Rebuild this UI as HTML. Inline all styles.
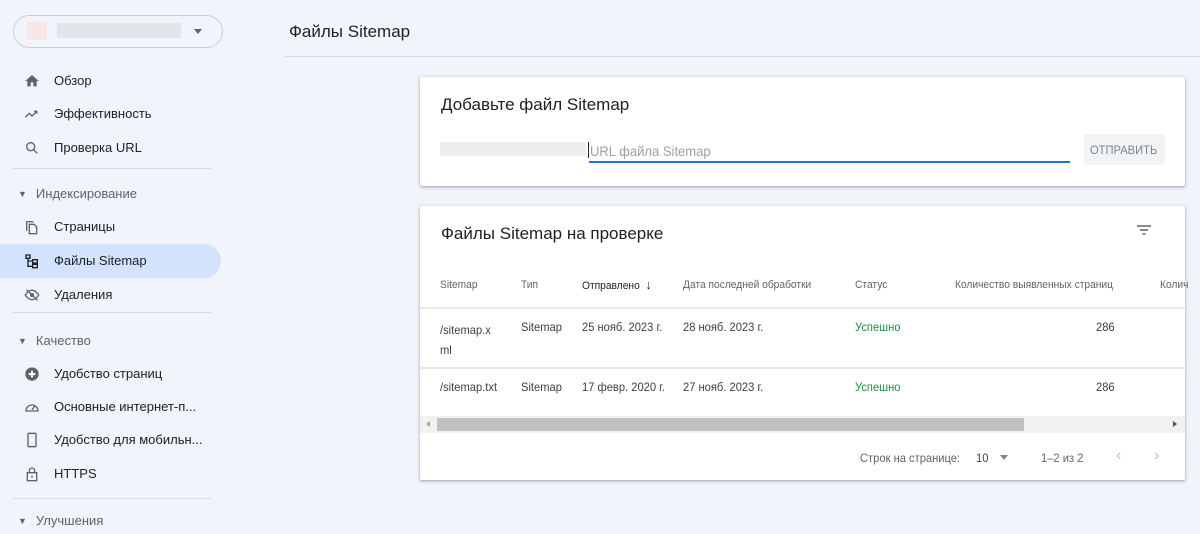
<!DOCTYPE html>
<html><head><meta charset="utf-8"><style>
*{box-sizing:border-box;margin:0;padding:0}
body{width:1200px;height:534px;overflow:hidden;background:#f1f4fb;font-family:"Liberation Sans",sans-serif;color:#202124;position:relative}
.a{position:absolute}
.nav{position:absolute;left:0;width:221px;height:34px;font-size:13px;color:#202124}
.nav span{position:absolute;left:54px;top:9px}
.nav svg{position:absolute;left:24px;top:9px}
.sec{position:absolute;left:18px;font-size:13px;color:#5f6368}
.sec i{font-style:normal;font-size:9px;margin-right:9px;position:relative;top:-1px}
.sep{position:absolute;left:13px;width:198px;height:1px;background:#dadce0}
.card{position:absolute;left:420px;width:765px;background:#fff;box-shadow:0 1px 2px rgba(60,64,67,.3),0 1px 3px 1px rgba(60,64,67,.15);border-radius:2px}
.th,.td{transform:scaleX(.93);transform-origin:left top;white-space:nowrap}
.th{position:absolute;top:73px;font-size:11px;color:#5f6368}
.td{position:absolute;font-size:12px;color:#3c4043}
.hl{position:absolute;left:0;right:0;height:1px;background:#e8eaed}
</style></head><body>
<div class="a" style="left:13px;top:15px;width:210px;height:33px;border:1px solid #c9ccd1;border-radius:17px"></div>
<div class="a" style="left:27px;top:22px;width:20px;height:18px;background:#f6e6e6"></div>
<div class="a" style="left:57px;top:23px;width:124px;height:15px;background:#e2e4e9"></div>
<div class="a" style="left:194px;top:29px;border:4px solid transparent;border-top:5px solid #5f6368"></div>

<div class="nav" style="top:64px"><svg width="16" height="16" viewBox="0 0 24 24"><path d="M10 20v-6h4v6h5v-8h3L12 3 2 12h3v8z" fill="#5f6368"/></svg><span>Обзор</span></div>
<div class="nav" style="top:97px"><svg width="16" height="16" viewBox="0 0 24 24"><path d="M2 17l6-6 4 4 7-7M15 8h4v4" fill="none" stroke="#5f6368" stroke-width="2"/></svg><span>Эффективность</span></div>
<div class="nav" style="top:131px"><svg width="16" height="16" viewBox="0 0 24 24"><circle cx="10" cy="10" r="6" fill="none" stroke="#5f6368" stroke-width="2"/><path d="M14.5 14.5L20 20" stroke="#5f6368" stroke-width="2"/></svg><span>Проверка URL</span></div>
<div class="sep" style="top:168px"></div>
<div class="sec" style="top:186px"><i>▼</i>Индексирование</div>
<div class="nav" style="top:210px"><svg width="16" height="16" viewBox="0 0 24 24"><path d="M4 4v14M4 4h10M8 8h7l4 4v10H8z" fill="none" stroke="#5f6368" stroke-width="2"/></svg><span>Страницы</span></div>
<div class="nav" style="top:244px;background:#d3e3fd;border-radius:0 17px 17px 0"><svg width="16" height="16" viewBox="0 0 24 24"><path d="M3 3h6v5H3zM13 10h7v5h-7zM13 17h7v5h-7zM6 8v12h7M6 12h7" fill="none" stroke="#202124" stroke-width="2"/></svg><span>Файлы Sitemap</span></div>
<div class="nav" style="top:278px"><svg width="16" height="16" viewBox="0 0 24 24"><path d="M2 12s4-7 10-7 10 7 10 7-4 7-10 7S2 12 2 12z" fill="none" stroke="#5f6368" stroke-width="2"/><circle cx="12" cy="12" r="3" fill="#5f6368"/><path d="M4 4l16 16" stroke="#5f6368" stroke-width="2"/></svg><span>Удаления</span></div>
<div class="sep" style="top:312px"></div>
<div class="sec" style="top:333px"><i>▼</i>Качество</div>
<div class="nav" style="top:357px"><svg width="16" height="16" viewBox="0 0 24 24"><circle cx="12" cy="12" r="10" fill="#5f6368"/><path d="M12 7v10M7 12h10" stroke="#fff" stroke-width="3"/></svg><span>Удобство страниц</span></div>
<div class="nav" style="top:390px"><svg width="16" height="16" viewBox="0 0 24 24"><path d="M3 18a9 9 0 0 1 18 0z" fill="none" stroke="#5f6368" stroke-width="2"/><path d="M12 16l4-5" stroke="#5f6368" stroke-width="2"/></svg><span>Основные интернет-п...</span></div>
<div class="nav" style="top:423px"><svg width="16" height="16" viewBox="0 0 24 24"><rect x="6" y="2" width="12" height="20" rx="1" fill="none" stroke="#5f6368" stroke-width="2"/></svg><span>Удобство для мобильн...</span></div>
<div class="nav" style="top:457px"><svg width="16" height="16" viewBox="0 0 24 24"><path d="M8 10V7a4 4 0 0 1 8 0v3" fill="none" stroke="#5f6368" stroke-width="2"/><rect x="5" y="10" width="14" height="12" fill="none" stroke="#5f6368" stroke-width="2"/><circle cx="12" cy="16" r="1.5" fill="#5f6368"/></svg><span>HTTPS</span></div>
<div class="sep" style="top:498px"></div>
<div class="sec" style="top:513px"><i>▼</i>Улучшения</div>

<div class="a" style="left:289px;top:22px;font-size:17px">Файлы Sitemap</div>
<div class="a" style="left:285px;top:56px;width:915px;height:1px;background:#dadce0"></div>

<div class="card" style="top:77px;height:109px">
 <div class="a" style="left:21px;top:18px;font-size:17px">Добавьте файл Sitemap</div>
 <div class="a" style="left:20px;top:65px;width:146px;height:14px;background:#eceef0"></div>
 <div class="a" style="left:168px;top:65px;width:1px;height:16px;background:#202124"></div>
 <div class="td" style="left:170px;top:66px;font-size:14px;color:#9aa0a6">URL файла Sitemap</div>
 <div class="a" style="left:169px;top:84px;width:481px;height:2px;background:#1a73e8"></div>
 <div class="a" style="left:664px;top:57px;width:81px;height:31px;background:#f1f3f4;border-radius:3px"></div>
 <div class="td" style="left:670px;top:66px;font-size:12px;color:#80868b">ОТПРАВИТЬ</div>
</div>

<div class="card" style="top:206px;height:274px">
 <div class="a" style="left:21px;top:18px;font-size:17px">Файлы Sitemap на проверке</div>
 <svg class="a" style="left:716px;top:17px" width="16" height="14" viewBox="0 0 16 14"><path d="M1 3h14M4 7h8M6.5 11h3" stroke="#5f6368" stroke-width="1.6"/></svg>
 <div class="th" style="left:20px">Sitemap</div>
 <div class="th" style="left:101px">Тип</div>
 <div class="th" style="left:162px;color:#202124;top:71px">Отправлено&nbsp;&nbsp;<span style="font-size:13px">↓</span></div>
 <div class="th" style="left:263px">Дата последней обработки</div>
 <div class="th" style="left:435px">Статус</div>
 <div class="th" style="left:535px">Количество выявленных страниц</div>
 <div class="th" style="left:740px">Колич</div>
 <div class="hl" style="top:101px;height:2px"></div>
 <div class="td" style="left:20px;top:114px;line-height:20px">/sitemap.x<br>ml</div>
 <div class="td" style="left:101px;top:114px">Sitemap</div>
 <div class="td" style="left:162px;top:114px">25 нояб. 2023 г.</div>
 <div class="td" style="left:263px;top:114px">28 нояб. 2023 г.</div>
 <div class="td" style="left:435px;top:114px;color:#1e8e3e">Успешно</div>
 <div class="td" style="left:676px;top:114px">286</div>
 <div class="hl" style="top:161px;height:2px"></div>
 <div class="td" style="left:20px;top:174px">/sitemap.txt</div>
 <div class="td" style="left:101px;top:174px">Sitemap</div>
 <div class="td" style="left:162px;top:174px">17 февр. 2020 г.</div>
 <div class="td" style="left:263px;top:174px">27 нояб. 2023 г.</div>
 <div class="td" style="left:435px;top:174px;color:#1e8e3e">Успешно</div>
 <div class="td" style="left:676px;top:174px">286</div>
 <div class="a" style="left:0;top:210px;width:765px;height:17px;background:#f1f1f1"></div>
 <div class="a" style="left:17px;top:212px;width:587px;height:13px;background:#c1c1c1"></div>
 <div class="a" style="left:6px;top:215px;border:3px solid transparent;border-right:4px solid #a3a3a3;border-left:0"></div>
 <div class="a" style="left:753px;top:215px;border:3px solid transparent;border-left:4px solid #505050;border-right:0"></div>
 <div class="td" style="left:440px;top:245px;color:#5f6368">Строк на странице:</div>
 <div class="td" style="left:556px;top:245px">10</div>
 <div class="a" style="left:580px;top:249px;border:4px solid transparent;border-top:5px solid #80868b"></div>
 <div class="td" style="left:621px;top:245px;color:#5f6368">1–2 из 2</div>
 <div class="a" style="left:696px;top:241px;color:#bdc1c6;font-size:16px">‹</div>
 <div class="a" style="left:734px;top:241px;color:#bdc1c6;font-size:16px">›</div>
</div>
</body></html>
